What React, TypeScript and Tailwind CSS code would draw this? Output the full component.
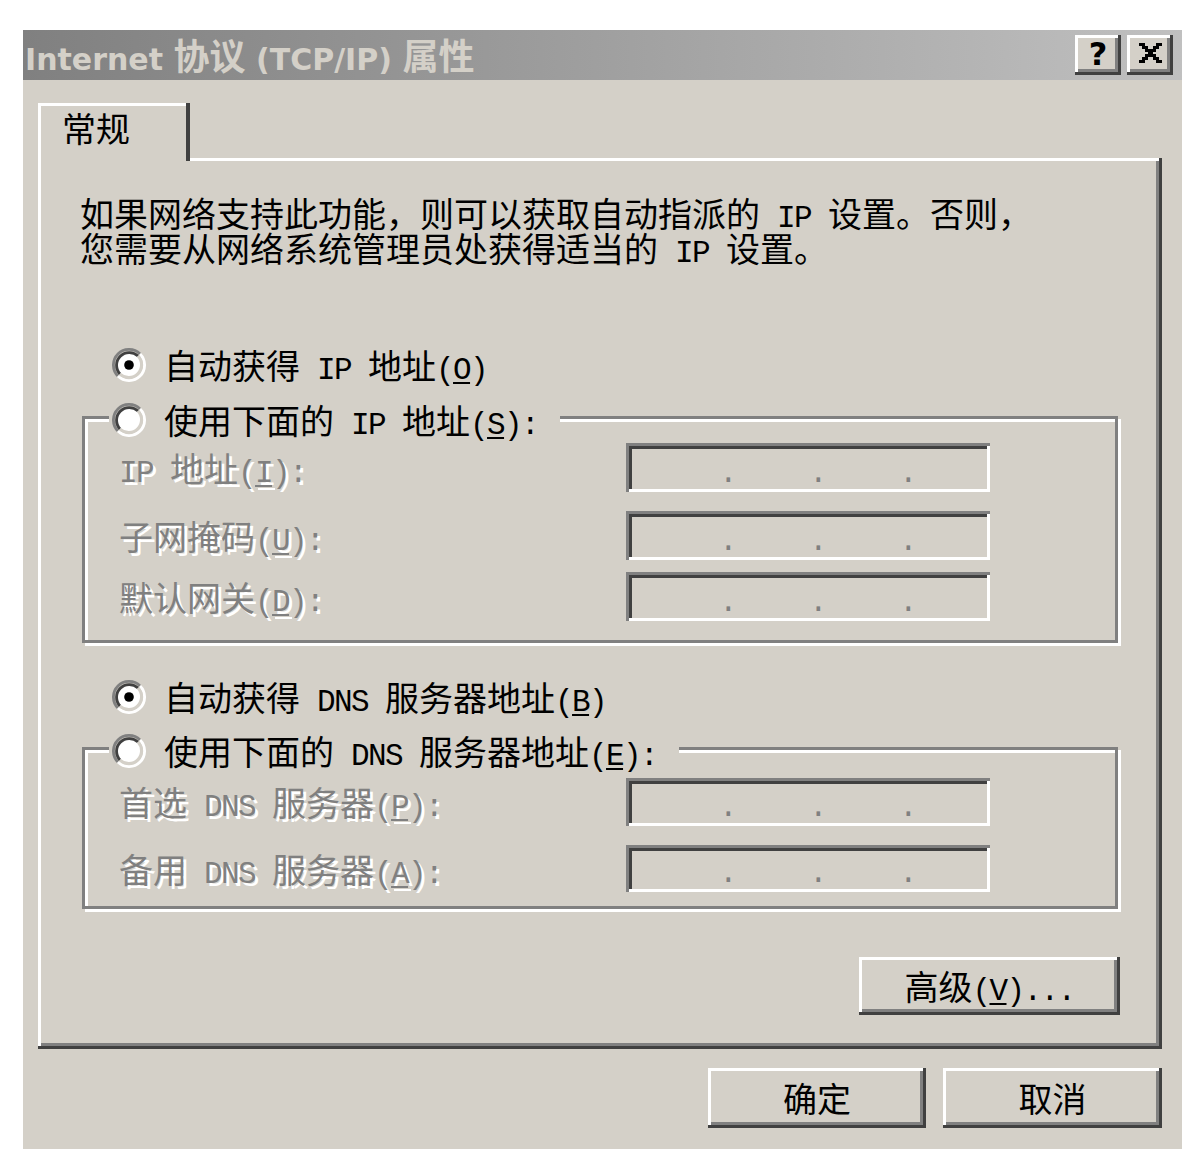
import React from 'react'

const cjk = "font-['Noto_Sans_CJK_SC',sans-serif]"
const mono =
  "font-['Liberation_Mono','DejaVu_Sans_Mono',monospace] text-[31px] tracking-[-1.6px] leading-[20px] whitespace-pre"
const raised =
  'shadow-[inset_-3px_-3px_0_#404040,inset_3px_3px_0_#fff,inset_-6px_-6px_0_#808080]'
const sunken =
  'shadow-[inset_3px_3px_0_#808080,inset_-3px_-3px_0_#fff,inset_6px_6px_0_#404040]'
const disabled = 'text-[#808080] [text-shadow:3px_3px_0_#fff]'

// splits a string so ascii runs use the half-width mono font
const Txt = ({ s }: { s: string }) => (
  <>
    {s.split(/([ -~]+)/).map((part, i) =>
      part === '' ? null : /^[ -~]+$/.test(part) ? (
        <span key={i} className={mono}>
          {part}
        </span>
      ) : (
        <React.Fragment key={i}>{part}</React.Fragment>
      )
    )}
  </>
)

const Label = ({ text, acc, colon }: { text: string; acc: string; colon?: boolean }) => (
  <span className="whitespace-nowrap">
    <Txt s={text} />
    <span className={mono}>
      (<span className="underline decoration-[2px] underline-offset-[3px]">{acc}</span>)
      {colon ? ':' : ''}
    </span>
  </span>
)

const Radio = ({ checked }: { checked?: boolean }) => (
  <svg width="34" height="34" viewBox="0 0 12 12" className="shrink-0">
    <circle cx="6" cy="6" r="4.5" fill="#fff" />
    <path d="M2.11 9.89 A5.5 5.5 0 0 1 9.89 2.11" stroke="#808080" fill="none" />
    <path d="M9.89 2.11 A5.5 5.5 0 0 1 2.11 9.89" stroke="#fff" fill="none" />
    <path d="M2.82 9.18 A4.5 4.5 0 0 1 9.18 2.82" stroke="#404040" fill="none" />
    <path d="M9.18 2.82 A4.5 4.5 0 0 1 2.82 9.18" stroke="#d4d0c8" fill="none" />
    {checked && <circle cx="6" cy="6" r="1.7" fill="#000" />}
  </svg>
)

const IpField = ({ h }: { h: string }) => (
  <div
    className={`w-[364px] ${h} shrink-0 bg-[#d4d0c8] ${sunken} flex items-end pb-[8px] pl-[93px] gap-[73px] text-[#808080]`}
  >
    <span className={`w-[17px] text-center ${mono}`}>.</span>
    <span className={`w-[17px] text-center ${mono}`}>.</span>
    <span className={`w-[17px] text-center ${mono}`}>.</span>
  </div>
)

const FieldRow = ({ text, acc, h, mt }: { text: string; acc: string; h: string; mt: string }) => (
  <div className={`flex items-center ml-[34px] ${mt}`}>
    <div className={`w-[507px] leading-[34px] ${disabled}`}>
      <Label text={text} acc={acc} colon />
    </div>
    <IpField h={h} />
  </div>
)

const CloseGlyph = () => {
  const rows = ['XX....XX', '.XX..XX.', '..XXXX..', '...XX...', '..XXXX..', '.XX..XX.', 'XX....XX']
  return (
    <svg width="25" height="20" viewBox="0 0 8 7" shapeRendering="crispEdges" className="-mt-[4px]">
      {rows.flatMap((r, y) =>
        r.split('').map((c, x) => (c === 'X' ? <rect key={`${x}-${y}`} x={x} y={y} width="1" height="1" fill="#000" /> : null))
      )}
    </svg>
  )
}

const Button = ({ w, h, children }: { w: string; h: string; children: React.ReactNode }) => (
  <button
    className={`${w} ${h} bg-[#d4d0c8] ${raised} flex items-center justify-center text-[34px] leading-[34px] text-black ${cjk}`}
  >
    {children}
  </button>
)

const App = () => {
  return (
    <div className="min-h-[1167px] bg-white pt-[30px]">
      <div className={`ml-[23px] w-[1159px] h-[1119px] bg-[#d4d0c8] ${cjk} text-black leading-[34px]`}>
        {/* title bar */}
        <div className="h-[50px] flex items-center bg-gradient-to-r from-[#808080] to-[#c0c0c0] pl-[2px]">
          <div className="flex-1 text-[#d4d0c8] font-bold whitespace-nowrap leading-none">
            <span className="font-['DejaVu_Sans',sans-serif] text-[30px]">Internet </span>
            <span className="text-[36px]">协议</span>
            <span className="font-['DejaVu_Sans',sans-serif] text-[30px]"> (TCP/IP) </span>
            <span className="text-[36px]">属性</span>
          </div>
          <div className="flex gap-[6px] mr-[9px]">
            <div className={`w-[46px] h-[40px] bg-[#d4d0c8] ${raised} flex items-center justify-center`}>
              <span className="font-['DejaVu_Sans',sans-serif] font-bold text-[32px] leading-none text-black -mt-[3px]">?</span>
            </div>
            <div className={`w-[46px] h-[40px] bg-[#d4d0c8] ${raised} flex items-center justify-center`}>
              <CloseGlyph />
            </div>
          </div>
        </div>

        <div className="pl-[15px] pr-[20px] pt-[23px]">
          {/* tab */}
          <div className="relative z-10 -mb-[3px] w-[152px] h-[58px] bg-[#d4d0c8] pl-[24px] pt-[7px] text-[34px] leading-[35px] shadow-[inset_-4px_0_0_#404040,inset_3px_3px_0_#fff]">
            常规
          </div>

          {/* panel */}
          <div className={`bg-[#d4d0c8] ${raised} px-[44px] pt-[37px] pb-[34px] flex flex-col text-[34px]`}>
            <p className="-ml-[2px] leading-[35px]">
              <Txt s="如果网络支持此功能，则可以获取自动指派的 IP 设置。否则，" />
              <br />
              <Txt s="您需要从网络系统管理员处获得适当的 IP 设置。" />
            </p>

            <div className="mt-[83px] ml-[30px] h-[34px] flex items-center gap-[18px]">
              <Radio checked />
              <Label text="自动获得 IP 地址" acc="O" />
            </div>

            <div className="mt-[34px] border-[3px] border-[#808080] shadow-[inset_3px_3px_0_#fff,3px_3px_0_#fff] pb-[19px]">
              <div className="-mt-[16px] ml-[24px] w-fit h-[34px] pl-[3px] pr-[22px] bg-[#d4d0c8] flex items-center gap-[18px]">
                <Radio />
                <Label text="使用下面的 IP 地址" acc="S" colon />
              </div>
              <FieldRow text="IP 地址" acc="I" h="h-[49px]" mt="mt-[6px]" />
              <FieldRow text="子网掩码" acc="U" h="h-[49px]" mt="mt-[19px]" />
              <FieldRow text="默认网关" acc="D" h="h-[49px]" mt="mt-[12px]" />
            </div>

            <div className="mt-[37px] ml-[30px] h-[34px] flex items-center gap-[18px]">
              <Radio checked />
              <Label text="自动获得 DNS 服务器地址" acc="B" />
            </div>

            <div className="mt-[33px] border-[3px] border-[#808080] shadow-[inset_3px_3px_0_#fff,3px_3px_0_#fff] pb-[14px]">
              <div className="-mt-[16px] ml-[24px] w-fit h-[34px] pl-[3px] pr-[22px] bg-[#d4d0c8] flex items-center gap-[18px]">
                <Radio />
                <Label text="使用下面的 DNS 服务器地址" acc="E" colon />
              </div>
              <FieldRow text="首选 DNS 服务器" acc="P" h="h-[48px]" mt="mt-[10px]" />
              <FieldRow text="备用 DNS 服务器" acc="A" h="h-[47px]" mt="mt-[19px]" />
            </div>

            <div className="mt-[48px] self-end -mr-[2px]">
              <Button w="w-[261px]" h="h-[58px]">
                <span className="whitespace-nowrap">
                  <Label text="高级" acc="V" />
                  <span className={mono}>...</span>
                </span>
              </Button>
            </div>
          </div>

          {/* footer buttons */}
          <div className="mt-[19px] flex justify-end gap-[17px]">
            <Button w="w-[218px]" h="h-[60px]">确定</Button>
            <Button w="w-[219px]" h="h-[60px]">取消</Button>
          </div>
        </div>
      </div>
    </div>
  )
}

export default App
